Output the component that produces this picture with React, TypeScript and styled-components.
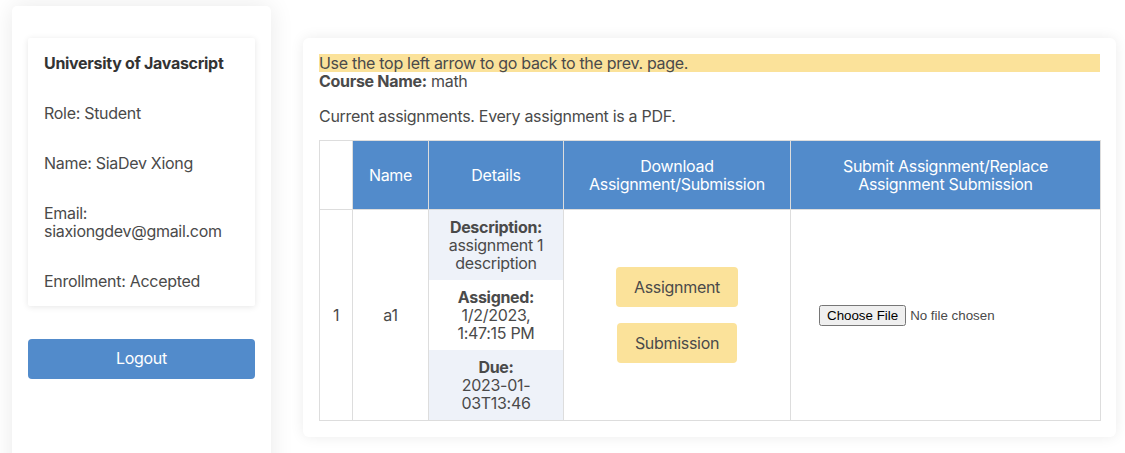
import React from "react";
import styled, { createGlobalStyle } from "styled-components";

const Global = createGlobalStyle`
  html, body { margin: 0; padding: 0; background: #ffffff; }
  body { font-family: Inter, "Noto Sans", sans-serif; color: #4a4a4a; font-size: 16px; line-height: 18px; letter-spacing: -0.3px; }
  * { box-sizing: border-box; }
`;

const Page = styled.div`
  display: flex;
  align-items: flex-start;
  gap: 32px;
  padding: 6px 0 0 12px;
  height: 453px;
  overflow: hidden;
`;

const Sidebar = styled.aside`
  width: 259px;
  height: 480px;
  flex-shrink: 0;
  background: #fff;
  border-radius: 5px;
  box-shadow: 0 0 24px rgba(0, 0, 0, 0.09);
  padding: 32px 16px;
  display: flex;
  flex-direction: column;
  gap: 33px;
`;

const ProfileCard = styled.div`
  background: #fff;
  box-shadow: 0 1px 6px rgba(0, 0, 0, 0.1);
  border-radius: 2px;
  padding: 16px;
  display: flex;
  flex-direction: column;
  gap: 32px;
`;

const ProfileItem = styled.div<{ $strong?: boolean }>`
  font-weight: ${(p) => (p.$strong ? 700 : 400)};
  color: ${(p) => (p.$strong ? "#333" : "#4a4a4a")};
`;

const LogoutButton = styled.button`
  height: 40px;
  width: 100%;
  border: none;
  border-radius: 4px;
  background: #528bcb;
  color: #fff;
  font-family: inherit;
  font-size: 16px;
  letter-spacing: inherit;
  line-height: 18px;
  padding: 0 0 2px;
`;

const MainCard = styled.main`
  margin-top: 32px;
  width: 813px;
  background: #fff;
  border-radius: 6px;
  box-shadow: 0 0 14px rgba(0, 0, 0, 0.08);
  padding: 16px;
`;

const Notice = styled.div`
  background: #fbe29a;
  color: #4a4a4a;
`;

const Label = styled.span`
  font-weight: 700;
`;

const Intro = styled.p`
  margin: 17px 0 15px;
`;

const Table = styled.table`
  width: 781px;
  border-collapse: collapse;
  table-layout: fixed;
  text-align: center;
`;

const HeadCell = styled.th<{ $blank?: boolean }>`
  background: ${(p) => (p.$blank ? "#fff" : "#528bcb")};
  color: #fff;
  font-weight: 400;
  border: 1px solid #dddddd;
  padding: 16px 8px;
  height: 68px;
`;

const Cell = styled.td<{ $flush?: boolean }>`
  border: 1px solid #dddddd;
  padding: ${(p) => (p.$flush ? "0" : "8px")};
  vertical-align: middle;
`;

const DetailBlock = styled.div<{ $shade?: boolean }>`
  background: ${(p) => (p.$shade ? "#eef2f9" : "#fff")};
  padding: 8px 13px;
  height: 70px;
`;

const ButtonStack = styled.div`
  display: flex;
  flex-direction: column;
  align-items: center;
  gap: 16px;
`;

const YellowButton = styled.button`
  height: 40px;
  padding: 0 18px;
  border: none;
  border-radius: 4px;
  background: #fbe29a;
  color: #4a4a4a;
  font-family: inherit;
  font-size: 16px;
  letter-spacing: inherit;
  line-height: 18px;
`;

const FileInput = styled.input`
  font-family: "Liberation Sans", Arial, sans-serif;
  letter-spacing: 0;
`;

export default function App() {
  return (
    <>
      <Global />
      <Page>
        <Sidebar>
          <ProfileCard>
            <ProfileItem $strong>University of Javascript</ProfileItem>
            <ProfileItem>Role: Student</ProfileItem>
            <ProfileItem>Name: SiaDev Xiong</ProfileItem>
            <ProfileItem>
              Email:
              <br />
              siaxiongdev@gmail.com
            </ProfileItem>
            <ProfileItem>Enrollment: Accepted</ProfileItem>
          </ProfileCard>
          <LogoutButton>Logout</LogoutButton>
        </Sidebar>
        <MainCard>
          <Notice>Use the top left arrow to go back to the prev. page.</Notice>
          <div>
            <Label>Course Name:</Label> math
          </div>
          <Intro>Current assignments. Every assignment is a PDF.</Intro>
          <Table>
            <colgroup>
              <col style={{ width: 33 }} />
              <col style={{ width: 76 }} />
              <col style={{ width: 135 }} />
              <col style={{ width: 227 }} />
              <col style={{ width: 310 }} />
            </colgroup>
            <thead>
              <tr>
                <HeadCell $blank />
                <HeadCell>Name</HeadCell>
                <HeadCell>Details</HeadCell>
                <HeadCell>
                  Download
                  <br />
                  Assignment/Submission
                </HeadCell>
                <HeadCell>
                  Submit Assignment/Replace
                  <br />
                  Assignment Submission
                </HeadCell>
              </tr>
            </thead>
            <tbody>
              <tr>
                <Cell>1</Cell>
                <Cell>a1</Cell>
                <Cell $flush>
                  <DetailBlock $shade>
                    <Label>Description:</Label>
                    <br />
                    assignment 1 description
                  </DetailBlock>
                  <DetailBlock>
                    <Label>Assigned:</Label>
                    <br />
                    1/2/2023, 1:47:15 PM
                  </DetailBlock>
                  <DetailBlock $shade>
                    <Label>Due:</Label>
                    <br />
                    2023-01-03T13:46
                  </DetailBlock>
                </Cell>
                <Cell>
                  <ButtonStack>
                    <YellowButton>Assignment</YellowButton>
                    <YellowButton>Submission</YellowButton>
                  </ButtonStack>
                </Cell>
                <Cell>
                  <FileInput type="file" />
                </Cell>
              </tr>
            </tbody>
          </Table>
        </MainCard>
      </Page>
    </>
  );
}
